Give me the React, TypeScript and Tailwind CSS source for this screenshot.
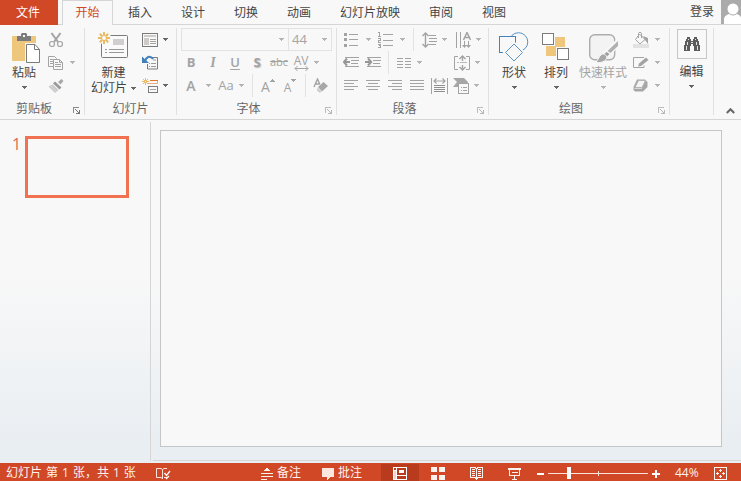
import React from 'react';

type IconProps = { w: number; h: number; children: React.ReactNode; crisp?: boolean };

function Icon({ w, h, children, crisp = true }: IconProps) {
  return (
    <svg
      width={w}
      height={h}
      viewBox={`0 0 ${w} ${h}`}
      fill="none"
      shapeRendering={crisp ? 'crispEdges' : 'auto'}
      className="block shrink-0"
      aria-hidden="true"
    >
      {children}
    </svg>
  );
}

const G = '#a3a3a3';
const D = '#7b7b7b';

function Arrow({ dark = false }: { dark?: boolean }) {
  return (
    <Icon w={5} h={3}>
      <path d="M0 0h5v1H0zM1 1h3v1H1zM2 2h1v1H2z" fill={dark ? '#666666' : '#b4b4b4'} />
    </Icon>
  );
}

function Tool({ label, className, children }: { label: string; className: string; children: React.ReactNode }) {
  return (
    <button type="button" aria-label={label} className={`flex h-[23px] shrink-0 items-center justify-center ${className}`}>
      {children}
    </button>
  );
}

function Sep() {
  return <span className="h-[23px] w-px shrink-0 bg-[#e2e2e2]" />;
}

function Launcher({ label, dark = false }: { label: string; dark?: boolean }) {
  return (
    <button type="button" aria-label={label} className="flex w-4 justify-center pt-1">
      <Icon w={7} h={7}>
        <path d="M0.5 6V0.5H6" stroke={dark ? '#8a8a8a' : '#bdbdbd'} />
        <path d="M2 2h1v1h1v1h1v1h1V3h1v4H3V6h2V5H4V4H3V3H2z" fill={dark ? '#777777' : '#b8b8b8'} />
      </Icon>
    </button>
  );
}

function Group({ title, launcher, dark, className = '', children }: {
  title: string;
  launcher?: string;
  dark?: boolean;
  className?: string;
  children: React.ReactNode;
}) {
  return (
    <section aria-label={title} className={`mt-[3px] mb-1 flex shrink-0 flex-col border-r border-[#e0e0e0] ${className}`}>
      <div className="flex h-[69px]">{children}</div>
      <div className="flex h-[18px] items-center pt-1">
        <h2 className="flex-1 pt-0.5 text-center leading-4 text-[#666666]">{title}</h2>
        {launcher && <Launcher label={launcher} dark={dark} />}
      </div>
    </section>
  );
}

function BigButton({ icon, lines, inlineArrow = false, muted = false, className }: {
  icon: React.ReactNode;
  lines: string[];
  inlineArrow?: boolean;
  muted?: boolean;
  className: string;
}) {
  return (
    <button
      type="button"
      className={`flex shrink-0 flex-col items-center whitespace-nowrap pt-1 leading-[15px] ${muted ? 'text-[#a3a3a3]' : 'text-[#444444]'} ${className}`}
    >
      <span className="flex h-[34px] items-start">{icon}</span>
      {lines.map((line, i) => (
        <span key={line} className="flex items-center gap-1">
          {line}
          {inlineArrow && i === lines.length - 1 && <Arrow dark />}
        </span>
      ))}
      {!inlineArrow && (
        <span className="flex h-[13px] items-center">
          <Arrow dark={!muted} />
        </span>
      )}
    </button>
  );
}

function Lines({ spans }: { spans: [number, number][] }) {
  return (
    <Icon w={14} h={11}>
      {spans.map(([x, w], i) => (
        <rect key={i} x={x} y={i * 3} width={w} height={1} fill={G} />
      ))}
    </Icon>
  );
}

/* Clipboard */
const pasteIcon = (
  <span className="pl-1">
    <Icon w={28} h={31} crisp={false}>
      <rect x="0" y="4" width="24" height="25" rx="1" fill="#eec77c" />
      <path d="M5 9V4h4V2l1-1h4l1 1v2h4v5z" fill="#7b7b7b" />
      <rect x="11" y="3" width="2" height="2" fill="#f8f8f8" />
      <path d="M13 11h11l5 6v14H13z" fill="#f8f8f8" />
      <path d="M14.5 12.5H23l4.5 5v13h-13z" fill="#ffffff" stroke="#7b7b7b" />
      <path d="M22.5 12.5v5h5" stroke="#7b7b7b" />
    </Icon>
  </span>
);

const cutIcon = (
  <Icon w={16} h={16} crisp={false}>
    <path d="M3.5 1l6.5 9M12.5 1L6 10" stroke={G} strokeWidth="2" />
    <circle cx="4" cy="12" r="2.5" stroke={G} strokeWidth="1.2" />
    <circle cx="12" cy="12" r="2.5" stroke={G} strokeWidth="1.2" />
  </Icon>
);

const copyIcon = (
  <Icon w={16} h={16} crisp={false}>
    <path d="M5 11.5H0.5v-10h6l2 2V5" stroke={G} />
    <path d="M2 4.5h3M2 6.5h3M2 8.5h3" stroke={G} />
    <path d="M5.5 4.5h6l3 3v7h-9z" stroke={G} />
    <path d="M11.5 5v2.5h3M7 7.5h3M7 9.5h6M7 11.5h6" stroke={G} />
  </Icon>
);

const brushIcon = (
  <Icon w={16} h={16} crisp={false}>
    <path d="M13.5 1l2 2-3 3.5-2.5-2.5z" fill="#a8a8a8" />
    <path d="M7 3.5l6.5 6-2 2-6.5-6z" fill="#9a9a9a" />
    <path d="M4.5 6.5l6 5.5-3.5 3L0.5 8.5z" fill="#c9c9c9" />
    <path d="M3 8l5 5.5" stroke="#dedede" />
  </Icon>
);

/* Slides */
const sunRays = 'M6 0v3M6 9v3M0 6h3M9 6h3M1.8 1.8L4 4M8 8l2.2 2.2M1.8 10.2L4 8M8 4l2.2-2.2';

const newSlideIcon = (
  <Icon w={31} h={28} crisp={false}>
    <rect x="3.5" y="3.5" width="26" height="22" rx="1" fill="#fafafa" stroke="#7b7b7b" />
    <rect x="15" y="7" width="11" height="6" fill="#d0cece" />
    <path d="M7 17.5h2M11 17.5h15M7 20.5h2M11 20.5h15" stroke="#999999" />
    <circle cx="6.5" cy="6" r="6.5" fill="#f8f8f8" />
    <path d={sunRays} stroke="#eabb64" strokeWidth="2" />
    <circle cx="6" cy="6" r="2.5" stroke="#eabb64" strokeWidth="1.2" fill="#ffffff" />
  </Icon>
);

const layoutIcon = (
  <Icon w={16} h={14}>
    <rect x="0.5" y="0.5" width="15" height="13" stroke={D} />
    <rect x="2" y="2" width="12" height="2" fill="#cfcbc9" />
    <rect x="2" y="5" width="5" height="7" fill="#cfcbc9" />
    <path d="M8 6.5h6M8 8.5h6M8 10.5h6" stroke={G} />
  </Icon>
);

const resetIcon = (
  <Icon w={16} h={15} crisp={false}>
    <path d="M10 2.5h5.5V14h-10V9" stroke={D} />
    <rect x="11" y="4" width="3" height="2" fill="#cfcbc9" />
    <path d="M7 8.5h1M9 8.5h5M7 11.5h1M9 11.5h5" stroke="#999999" />
    <path d="M3 6C4 2 8 0 11 4" stroke="#3f7fba" strokeWidth="2" />
    <path d="M0 1.5V8h7z" fill="#3f7fba" />
  </Icon>
);

const sectionIcon = (
  <Icon w={16} h={16} crisp={false}>
    <path d="M3.5 0v7M0 3.5h7M1 1l5 5M6 1L1 6" stroke="#eabb64" />
    <rect x="3" y="3" width="1" height="1" fill="#ffffff" />
    <rect x="8" y="2" width="8" height="1" fill="#e0762f" />
    <path d="M6 5.5h9.5V3" stroke="#e0762f" opacity="0.6" />
    <rect x="6.5" y="8.5" width="9" height="6" stroke={D} />
    <path d="M8 11.5h6" stroke={G} />
  </Icon>
);

/* Paragraph */
const bulletsIcon = (
  <Icon w={14} h={15}>
    <path d="M0 1h3v3H0zM0 6h3v3H0zM0 12h3v3H0z" fill={G} />
    <path d="M5 2.5h9M5 7.5h9M5 13.5h9" stroke={G} />
  </Icon>
);

const numberingIcon = (
  <Icon w={15} h={16}>
    <path d="M1 0h1v4h1v1H0V4h1V1H0V0zM0 6h3v3H1v1h2v1H0V8h2V7H0zM0 12h3v4H0v-1h2v-1H1v-1H0z" fill={G} />
    <path d="M5 2.5h10M5 8.5h10M5 13.5h10" stroke={G} />
  </Icon>
);

const spacingIcon = (
  <Icon w={15} h={16} crisp={false}>
    <path d="M3.5 1v14M0.5 4l3-3 3 3M0.5 12l3 3 3-3" stroke={G} strokeWidth="1.4" />
    <path d="M7 3.5h7M7 6.5h8M7 9.5h8M7 12.5h7" stroke={G} />
  </Icon>
);

const directionIcon = (
  <Icon w={16} h={16} crisp={false}>
    <path d="M1.5 0v16M5.5 0v16M9.5 9v5M13.5 9v5" stroke={G} />
    <path d="M8.5 8L12 0.5 15.5 8M9.5 5.5h5" stroke={G} strokeWidth="1.5" />
    <path d="M7 13h5l-2.5 3zM11 13h5l-2.5 3z" fill={G} />
  </Icon>
);

const outdentIcon = (
  <Icon w={16} h={11} crisp={false}>
    <path d="M2 0.5h14M8 3.5h8M8 6.5h7M2 9.5h14" stroke={G} />
    <path d="M1 5h6M4 1.5L0.8 5 4 8.5" stroke="#979797" strokeWidth="2" />
  </Icon>
);

const indentIcon = (
  <Icon w={16} h={11} crisp={false}>
    <path d="M2 0.5h14M8 3.5h8M8 6.5h7M2 9.5h14" stroke={G} />
    <path d="M0 5h6M3 1.5L6.2 5 3 8.5" stroke="#979797" strokeWidth="2" />
  </Icon>
);

const columnsIcon = (
  <Icon w={14} h={10}>
    <path d="M0 0.5h6M8 0.5h6M0 3.5h6M8 3.5h6M0 6.5h6M8 6.5h6M0 9.5h6M8 9.5h6" stroke={G} />
  </Icon>
);

const alignTextIcon = (
  <Icon w={16} h={16} crisp={false}>
    <path d="M4 1.5H0.5v13H4M12 1.5h3.5v13H12" stroke={G} />
    <path d="M8.5 1v5M8.5 10v5M5.5 4l3-3 3 3M5.5 12l3 3 3-3" stroke={G} strokeWidth="1.4" />
    <path d="M3 7.5h2M6 7.5h7" stroke="#b9b9b9" />
  </Icon>
);

const distributeIcon = (
  <Icon w={17} h={16} crisp={false}>
    <path d="M0.5 0v16M16.5 0v16" stroke={G} />
    <path d="M3 3h11M5.5 0.5L3 3l2.5 2.5M11.5 0.5L14 3l-2.5 2.5" stroke={G} strokeWidth="1.2" />
    <path d="M3 7.5h11M3 9.5h11M3 11.5h11M3 13.5h11" stroke="#8f8f8f" />
  </Icon>
);

const smartArtIcon = (
  <Icon w={16} h={16} crisp={false}>
    <path d="M0 0h11l4 4-1 2H5v3H0l4-5z" fill="#a6a6a6" />
    <rect x="5.5" y="5.5" width="10" height="10" fill="#f8f8f8" stroke={G} />
    <path d="M8 9.5h1M10 9.5h4M8 12.5h1M10 12.5h4" stroke={G} />
  </Icon>
);

/* Drawing */
const shapesIcon = (
  <Icon w={30} h={30} crisp={false}>
    <circle cx="19.5" cy="10" r="9.3" stroke="#5b93c5" />
    <rect x="0.5" y="4.5" width="16" height="16" fill="#f8f8f8" stroke="#4483bb" />
    <path d="M15 12L23.5 20.5 15 29 6.500 20.5z" fill="#f8f8f8" stroke="#f8f8f8" strokeWidth="4" />
    <path d="M15 12L23.5 20.5 15 29 6.5 20.5z" fill="#f8f8f8" stroke="#5b93c5" />
  </Icon>
);

const arrangeIcon = (
  <Icon w={28} h={28}>
    <rect x="0.5" y="1.5" width="11" height="11" stroke={D} fill="#ffffff" />
    <path d="M13 5h10v10h-9v9H4V14h9z" fill="#eec77c" />
    <rect x="14" y="15" width="13" height="13" fill="#f8f8f8" />
    <rect x="15.5" y="16.5" width="11" height="11" stroke={D} fill="#ffffff" />
  </Icon>
);

const stylesIcon = (
  <Icon w={30} h={31} crisp={false}>
    <rect x="1.7" y="2.7" width="25" height="25" rx="5" stroke="#adadad" strokeWidth="1.4" fill="#f3f3f3" />
    <path d="M30 8v5L20 24l-3-3z" fill="#f8f8f8" stroke="#f8f8f8" strokeWidth="3" />
    <path d="M30 9v5l-7.5 7-3-2z" fill="#b0b0b0" />
    <path d="M18.5 20l3 2-3 3-3-2z" fill="#9c9c9c" />
    <path d="M13.5 22.5c3-1.5 6 1 5 4-2 4-7 4.500-11 4 3-2 3-6 6-8z" fill="#a8a8a8" stroke="#f8f8f8" />
  </Icon>
);

const fillIcon = (
  <Icon w={16} h={16} crisp={false}>
    <path d="M6.5 2L12 7.5 7 12 2.5 7.5z" stroke={G} />
    <path d="M5.5 6V1.5c0-1.5 3-1.5 3 0V6" stroke={G} />
    <path d="M10 4l5 2v6l-3-4z" fill={G} />
    <rect x="0" y="12" width="16" height="4" fill="#e2e2e2" />
  </Icon>
);

const outlineIcon = (
  <Icon w={16} h={12} crisp={false}>
    <path d="M11 0.5H0.5v10H11v-2" stroke={G} />
    <path d="M5 9.5L6 6.5 13 0.5 15.5 3 8 9z" fill={G} />
  </Icon>
);

const effectsIcon = (
  <Icon w={16} h={13} crisp={false}>
    <path d="M4 0.5h8L14.5 3v5L10 12.5H2L0.5 11V8z" fill="#a6a6a6" />
    <path d="M5.5 1.5h7L9 8.5H2z" fill="#f4f4f4" stroke="#b5b5b5" />
    <path d="M1.5 9.5H9" stroke="#d8d8d8" />
  </Icon>
);

const findIcon = (
  <Icon w={16} h={14}>
    <path d="M3 0h3v2h1v2h2V2h1V0h3v2h1v2h1v4h1v6h-6V9H9V7H7v2H6v5H0V8h1V4h1V2h1z" fill="#5c5c5c" />
    <path d="M4 2h1v1H4zM11 2h1v1h-1zM3 5h1v3H3zM12 5h1v3h-1zM2 9h1v4H2zM13 9h1v4h-1zM7 5h2v1H7z" fill="#e4e4e4" />
  </Icon>
);

const tabs = ['插入', '设计', '切换', '动画', '幻灯片放映', '审阅', '视图'];

function TabBar() {
  return (
    <header className="flex h-[25px] border-b border-[#d5d5d5] text-[#444444]">
      <button type="button" className="h-[25px] w-[58px] shrink-0 bg-[#d14827] pl-4 text-left text-white">
        文件
      </button>
      <nav aria-label="功能区" className="flex min-w-0 flex-1">
        <button type="button" aria-current="page" className="ml-1 h-[25px] w-[51px] shrink-0 border-x border-t border-[#d5d5d5] bg-[#f8f8f8] text-[#d14827]">
          开始
        </button>
        <div className="ml-[15px] flex gap-[29px] whitespace-nowrap">
          {tabs.map((t) => (
            <button key={t} type="button" className="pt-px">{t}</button>
          ))}
        </div>
      </nav>
      <button type="button" className="mr-[7px] shrink-0">登录</button>
      <span className="shrink-0 bg-[#ababab]">
        <Icon w={20} h={24} crisp={false}>
          <path d="M3 24v-5c0-3 4-5 6-5h6c2 0 5 2 5 4v6z" fill="#ffffff" />
          <circle cx="12" cy="9" r="6.5" fill="#ababab" />
          <circle cx="12" cy="9" r="5.5" fill="#ffffff" />
        </Icon>
      </span>
    </header>
  );
}

function FontGroup() {
  return (
    <Group title="字体" launcher="字体设置" className="w-[160px]">
      <div className="flex flex-col pl-[3px] text-[#a3a3a3]">
        <div className="ml-px flex h-[23px] border border-[#e2e2e2]">
          <label className="relative flex w-[107px] items-center border-r border-[#e2e2e2]">
            <input aria-label="字体名称" className="h-full w-full bg-transparent px-1 outline-none" />
            <span className="pointer-events-none absolute right-1"><Arrow /></span>
          </label>
          <label className="relative flex w-[42px] items-center">
            <select
              aria-label="字号"
              defaultValue="44"
              className="h-full w-full appearance-none bg-transparent pl-[3px] font-['Open_Sans','Noto_Sans',sans-serif] text-[13px] outline-none"
            >
              <option>44</option>
            </select>
            <span className="pointer-events-none absolute right-1"><Arrow /></span>
          </label>
        </div>
        <div className="flex font-['Open_Sans','Noto_Sans',sans-serif] text-[13px]">
          <Tool label="加粗" className="w-[22px]"><b>B</b></Tool>
          <Tool label="倾斜" className="w-[22px]"><i className="font-['Liberation_Serif',serif] text-sm font-bold">I</i></Tool>
          <Tool label="下划线" className="w-[22px]"><span className="font-semibold underline underline-offset-2">U</span></Tool>
          <Tool label="文字阴影" className="w-[22px]"><b className="[text-shadow:1px_1px_1px_#bbbbbb]">S</b></Tool>
          <Tool label="删除线" className="w-[22px]"><span className="text-[11px] line-through">abc</span></Tool>
          <Tool label="字符间距" className="w-[22px] flex-col">
            <span className="text-xs leading-[11px]">AV</span>
            <Icon w={15} h={5} crisp={false}>
              <path d="M1 2.5h13M3.5 0L1 2.5 3.5 5M11.5 0L14 2.5 11.5 5" stroke={G} />
            </Icon>
          </Tool>
          <Tool label="字符间距选项" className="w-2"><Arrow /></Tool>
        </div>
        <div className="flex font-['Open_Sans','Noto_Sans',sans-serif] text-sm">
          <Tool label="字体颜色" className="w-[22px]"><span className="font-semibold">A</span></Tool>
          <Tool label="字体颜色选项" className="w-3"><Arrow /></Tool>
          <Tool label="更改大小写" className="w-6"><span className="text-[13px]">Aa</span></Tool>
          <Tool label="更改大小写选项" className="mr-2 w-1.5"><Arrow /></Tool>
          <Sep />
          <Tool label="增大字号" className="ml-1 w-[22px]">
            <span className="pt-0.5">A</span>
            <span className="pb-2.5">
              <Icon w={5} h={3}><path d="M2 0h1v1H2zM1 1h3v1H1zM0 2h5v1H0z" fill={G} /></Icon>
            </span>
          </Tool>
          <Tool label="减小字号" className="mr-1 w-[22px]">
            <span className="pt-1 text-xs">A</span>
            <span className="pb-2.5">
              <Icon w={5} h={3}><path d="M0 0h5v1H0zM1 1h3v1H1zM2 2h1v1H2z" fill={G} /></Icon>
            </span>
          </Tool>
          <Sep />
          <Tool label="清除格式" className="ml-1 w-[22px]">
            <Icon w={16} h={16} crisp={false}>
              <path d="M1 9l3.5-8L8 9M2 6h5" stroke={G} strokeWidth="1.4" />
              <path d="M3 10.5L10 4l5 4-7.5 7h-1z" fill="#f8f8f8" stroke="#f8f8f8" />
              <path d="M10.5 4L15 8l-6 5.5L5 9z" fill="#a8a8a8" />
              <path d="M4.5 9.5l4 4-1.5 1.5-3-2.5z" fill="#cccccc" />
            </Icon>
          </Tool>
        </div>
      </div>
    </Group>
  );
}

function ParagraphGroup() {
  return (
    <Group title="段落" launcher="段落设置" className="w-[152px]">
      <div className="flex flex-col pl-[3px]">
        <div className="flex">
          <Tool label="项目符号" className="w-[22px]">{bulletsIcon}</Tool>
          <Tool label="项目符号选项" className="w-3"><Arrow /></Tool>
          <Tool label="编号" className="w-[22px]">{numberingIcon}</Tool>
          <Tool label="编号选项" className="mr-[5px] w-3"><Arrow /></Tool>
          <Sep />
          <Tool label="行距" className="ml-1 w-[22px]">{spacingIcon}</Tool>
          <Tool label="行距选项" className="mr-1 w-2"><Arrow /></Tool>
          <Tool label="文字方向" className="w-[22px]">{directionIcon}</Tool>
          <Tool label="文字方向选项" className="w-2"><Arrow /></Tool>
        </div>
        <div className="flex">
          <Tool label="降低列表级别" className="w-[22px]">{outdentIcon}</Tool>
          <Tool label="提高列表级别" className="mr-1 w-[22px]">{indentIcon}</Tool>
          <Sep />
          <Tool label="分栏" className="ml-1 w-[22px]">{columnsIcon}</Tool>
          <Tool label="分栏选项" className="mr-7 w-2"><Arrow /></Tool>
          <Tool label="对齐文本" className="w-[22px]">{alignTextIcon}</Tool>
          <Tool label="对齐文本选项" className="w-2"><Arrow /></Tool>
        </div>
        <div className="flex">
          <Tool label="左对齐" className="w-[22px]"><Lines spans={[[0, 14], [0, 10], [0, 14], [0, 10]]} /></Tool>
          <Tool label="居中" className="w-[22px]"><Lines spans={[[0, 14], [2, 10], [0, 14], [2, 10]]} /></Tool>
          <Tool label="右对齐" className="w-[22px]"><Lines spans={[[0, 14], [4, 10], [0, 14], [4, 10]]} /></Tool>
          <Tool label="两端对齐" className="w-[22px]"><Lines spans={[[0, 14], [0, 14], [0, 14], [0, 14]]} /></Tool>
          <Tool label="分散对齐" className="w-[22px]">{distributeIcon}</Tool>
          <Tool label="转换为 SmartArt" className="w-[22px]">{smartArtIcon}</Tool>
          <Tool label="SmartArt 选项" className="w-2"><Arrow /></Tool>
        </div>
      </div>
    </Group>
  );
}

function Ribbon() {
  return (
    <div className="flex border-b border-[#d5d5d5]">
      <Group title="剪贴板" launcher="剪贴板设置" dark className="w-[85px]">
        <BigButton icon={pasteIcon} lines={['粘贴']} className="ml-1 w-10" />
        <div className="flex flex-col">
          <Tool label="剪切" className="w-6">{cutIcon}</Tool>
          <div className="flex">
            <Tool label="复制" className="w-6">{copyIcon}</Tool>
            <Tool label="复制选项" className="w-2"><Arrow /></Tool>
          </div>
          <Tool label="格式刷" className="w-6">{brushIcon}</Tool>
        </div>
      </Group>

      <Group title="幻灯片" className="w-[92px]">
        <BigButton icon={newSlideIcon} lines={['新建', '幻灯片']} inlineArrow className="ml-1 w-[49px]" />
        <div className="flex flex-col">
          <div className="flex">
            <Tool label="版式" className="w-6">{layoutIcon}</Tool>
            <Tool label="版式选项" className="w-1.5"><Arrow dark /></Tool>
          </div>
          <Tool label="重置" className="w-6">{resetIcon}</Tool>
          <div className="flex">
            <Tool label="节" className="w-6">{sectionIcon}</Tool>
            <Tool label="节选项" className="w-1.5"><Arrow dark /></Tool>
          </div>
        </div>
      </Group>

      <FontGroup />
      <ParagraphGroup />

      <Group title="绘图" launcher="绘图设置" className="w-[181px]">
        <BigButton icon={shapesIcon} lines={['形状']} className="ml-1 w-[42px]" />
        <BigButton icon={arrangeIcon} lines={['排列']} className="w-[42px]" />
        <BigButton icon={stylesIcon} lines={['快速样式']} muted className="w-[52px]" />
        <div className="flex flex-col">
          <div className="flex">
            <Tool label="形状填充" className="w-6">{fillIcon}</Tool>
            <Tool label="形状填充选项" className="w-2"><Arrow /></Tool>
          </div>
          <div className="flex">
            <Tool label="形状轮廓" className="w-6">{outlineIcon}</Tool>
            <Tool label="形状轮廓选项" className="w-2"><Arrow /></Tool>
          </div>
          <div className="flex">
            <Tool label="形状效果" className="w-6">{effectsIcon}</Tool>
            <Tool label="形状效果选项" className="w-2"><Arrow /></Tool>
          </div>
        </div>
      </Group>

      <section aria-label="编辑" className="mt-[3px] mb-1 flex w-11 shrink-0 justify-center border-r border-[#e0e0e0] pt-px">
        <button type="button" className="flex flex-col items-center leading-[15px] text-[#444444]">
          <span className="mb-1.5 flex size-[30px] items-center justify-center border border-[#c6c6c6]">{findIcon}</span>
          编辑
          <span className="flex h-[13px] items-center"><Arrow dark /></span>
        </button>
      </section>

      <button type="button" aria-label="折叠功能区" className="mr-1.5 mb-[5px] ml-auto self-end">
        <Icon w={9} h={6} crisp={false}>
          <path d="M0.8 5L4.5 1.2 8.2 5" stroke="#666666" strokeWidth="2" />
        </Icon>
      </button>
    </div>
  );
}

function StatusBar() {
  return (
    <footer className="flex h-[18px] shrink-0 items-center bg-[#d14827] whitespace-nowrap text-[#fdf1ed]">
      <p className="ml-1.5 flex gap-1 pt-0.5">
        <span>幻灯片</span>
        <span>第</span>
        <span className="font-['Open_Sans','Noto_Sans',sans-serif]">1</span>
        <span>张，共</span>
        <span className="font-['Open_Sans','Noto_Sans',sans-serif]">1</span>
        <span>张</span>
      </p>
      <button type="button" aria-label="拼写检查" className="ml-5 pt-0.5">
        <Icon w={15} h={13} crisp={false}>
          <path d="M6.5 11.5L5 10.5H0.5v-9H5l1.5 1 1.5-1h3M6.5 2.5V12M8 10.5h3" stroke="#fbe3dc" />
          <path d="M8.5 6l2 2.5L14 4M10 12l3-3" stroke="#ffffff" strokeWidth="1.3" />
        </Icon>
      </button>

      <div className="ml-auto flex items-center">
        <button type="button" className="flex items-center gap-1">
          <span className="pt-1">
            <Icon w={12} h={12}>
              <path d="M5 0h2v1h1v1h1v1H3V2h1V1h1z" fill="#fdf1ed" />
              <path d="M0 5.5h12M0 8.5h12M0 11.5h6" stroke="#fdf1ed" />
            </Icon>
          </span>
          <span className="pt-0.5">备注</span>
        </button>
        <button type="button" className="ml-[21px] flex items-center gap-1">
          <span className="pt-1">
            <Icon w={12} h={12}>
              <path d="M0 0h12v9H8v1H7v1H6v1H5V9H0z" fill="#fbe6e0" />
            </Icon>
          </span>
          <span className="pt-0.5">批注</span>
        </button>
        <div className="ml-[19px] flex">
          <button type="button" aria-label="普通视图" aria-pressed="true" className="flex h-[18px] w-[38px] items-center justify-center border-t border-[#d14827] bg-[#b83b1d] pt-0.5">
            <Icon w={14} h={13}>
              <path d="M0 0h14v13H0zM1 1v2h2V1zM4 1v7h9V1zM4 9v3h9V9z" fill="#ffffff" fillRule="evenodd" />
              <rect x="6" y="3" width="5" height="3" fill="#ffffff" />
              <rect x="1" y="4" width="2" height="8" fill="#f3d5cc" />
            </Icon>
          </button>
          <button type="button" aria-label="幻灯片浏览" className="flex h-[18px] w-[38px] items-center justify-center pt-[3px]">
            <Icon w={14} h={13}>
              <path d="M0 0h6v5H0zM8 0h6v5H8zM0 8h6v5H0zM8 8h6v5H8z" fill="#fdf1ed" />
            </Icon>
          </button>
          <button type="button" aria-label="阅读视图" className="flex h-[18px] w-[38px] items-center justify-center pt-[3px]">
            <Icon w={13} h={13}>
              <path d="M0.5 0.5H5L6.5 2 8 0.5h4.5v10H8L6.5 12 5 10.5H0.5z" stroke="#fdf1ed" />
              <path d="M2 2.5h3M2 4.5h3M2 6.5h3M2 8.5h3M8 2.5h3M8 4.5h3M8 6.5h3M8 8.5h3M6.5 2v11" stroke="#fdf1ed" />
            </Icon>
          </button>
          <button type="button" aria-label="幻灯片放映" className="flex h-[18px] w-[38px] items-center justify-center pt-1">
            <Icon w={13} h={12}>
              <path d="M0 0h13v2H0zM6 8h1v3H6zM4 11h5v1H4z" fill="#fdf1ed" />
              <path d="M1.5 2v5.5h10V2M4 4.5h6" stroke="#fdf1ed" />
            </Icon>
          </button>
        </div>
        <button type="button" aria-label="缩小" className="ml-1 flex h-[18px] items-center pt-[3px]">
          <span className="h-0.5 w-[7px] bg-white" />
        </button>
        <div className="relative ml-1 flex h-[18px] w-[100px] items-center pt-[3px]">
          <span className="absolute left-[50px] h-[5px] w-px bg-[#fbe3dc]" />
          <input
            type="range"
            aria-label="缩放"
            min={0}
            max={100}
            defaultValue={20}
            className="m-0 h-3 w-full appearance-none bg-transparent [&::-webkit-slider-runnable-track]:h-px [&::-webkit-slider-runnable-track]:bg-[#fbe3dc] [&::-webkit-slider-thumb]:-mt-[6px] [&::-webkit-slider-thumb]:h-3 [&::-webkit-slider-thumb]:w-1 [&::-webkit-slider-thumb]:appearance-none [&::-webkit-slider-thumb]:bg-white"
          />
        </div>
        <button type="button" aria-label="放大" className="ml-1 flex h-[18px] items-center pt-[3px]">
          <Icon w={8} h={8}>
            <path d="M3 0h2v3h3v2H5v3H3V5H0V3h3z" fill="#ffffff" />
          </Icon>
        </button>
        <span className="ml-[15px] w-[39px] pt-0.5 font-['Open_Sans','Noto_Sans',sans-serif]">44%</span>
        <button type="button" aria-label="适应窗口" className="mr-[14px] pt-[3px]">
          <Icon w={13} h={13}>
            <rect x="0.5" y="0.5" width="12" height="12" stroke="#fdf1ed" />
            <path d="M6 2h1v3H6zM5 3h3v1H5zM6 8h1v3H6zM5 9h3v1H5zM2 6h3v1H2zM3 5h1v3H3zM8 6h3v1H8zM9 5h1v3H9z" fill="#fdf1ed" />
          </Icon>
        </button>
      </div>
    </footer>
  );
}

export default function App() {
  return (
    <div className="flex h-screen flex-col overflow-hidden bg-[#f8f8f8] font-['Liberation_Sans','Noto_Sans_CJK_SC',sans-serif] text-xs">
      <TabBar />
      <Ribbon />
      <main className="flex min-h-0 flex-1 bg-linear-to-b from-[#f8f8f8] from-45% to-[#e9eef2] to-95% pt-0.5 pb-0.5">
        <aside aria-label="幻灯片缩略图" className="flex w-[151px] shrink-0 items-start border-r border-[#d5d5d5] pt-3.5">
          <span className="w-[25px] pl-3 font-['Open_Sans','Noto_Sans',sans-serif] text-base leading-4 text-[#dd6c50]">1</span>
          <button type="button" aria-label="幻灯片 1" className="h-[62px] w-[104px] border-3 border-[#f07251] bg-[#f8f8f8]" />
        </aside>
        <div className="ml-0.5 flex min-w-0 flex-1 border-b border-[#d5d5d5] pt-2 pr-[19px] pb-[13px] pl-[7px]">
          <div className="flex-1 border border-[#c6c6c6] bg-[#f8f8f8]" />
        </div>
      </main>
      <StatusBar />
    </div>
  );
}
